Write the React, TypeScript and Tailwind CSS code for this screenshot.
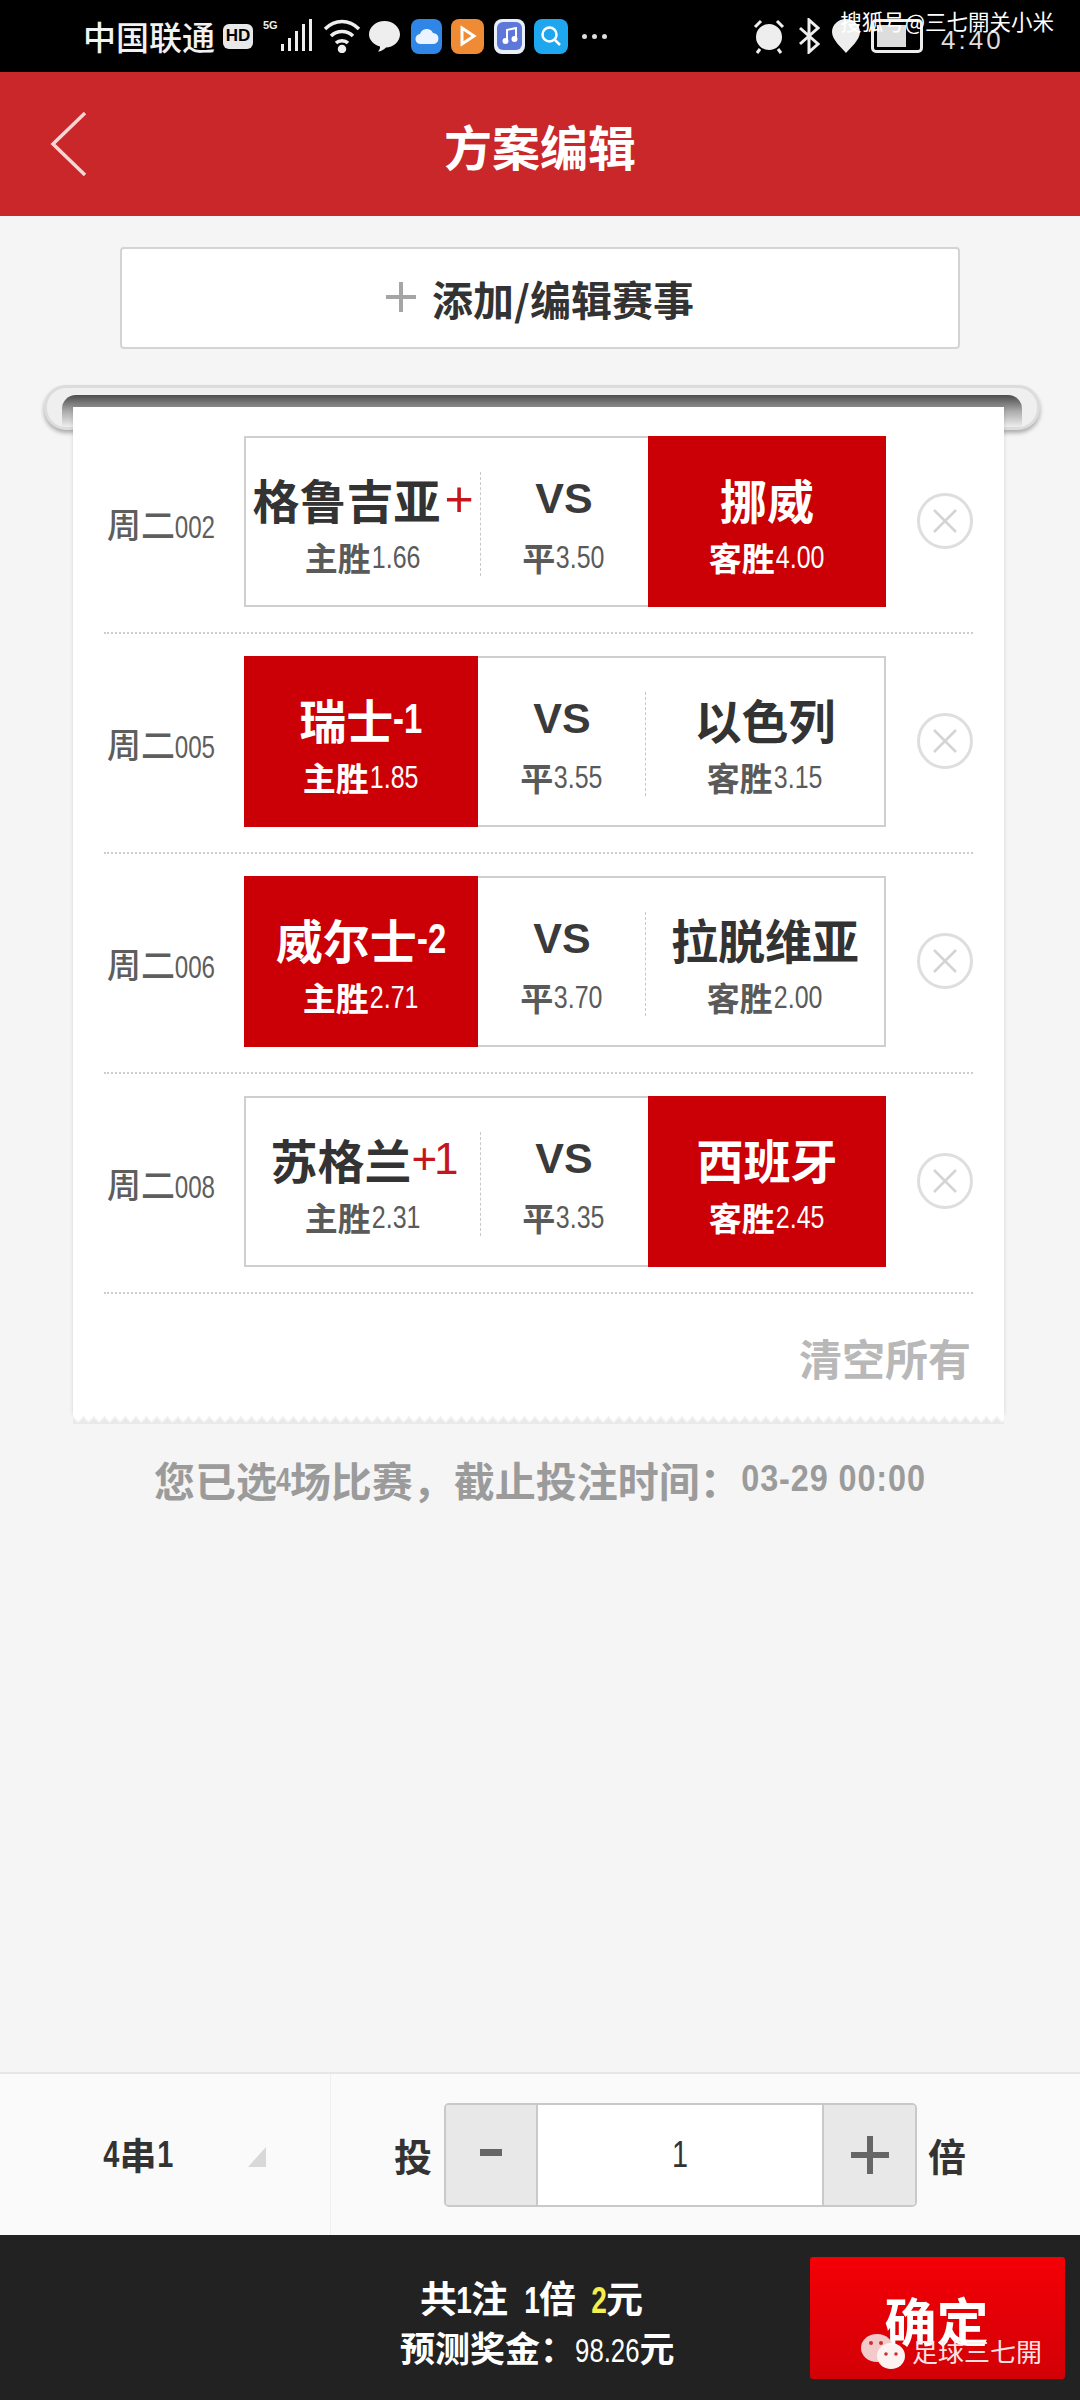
import React from "react";

const cjk = "font-['Noto_Sans_CJK_SC','Liberation_Sans',sans-serif]";
const latin = "font-['Liberation_Sans','Noto_Sans_CJK_SC',sans-serif]";

function Nar({ children, className = "" }: { children: React.ReactNode; className?: string }) {
  return <span className={`inline-block scale-x-[.78] ${latin} ${className}`}>{children}</span>;
}

type Cell = { name: React.ReactNode; odds: string; label: string };
type Row = { code: string; home: Cell; draw: string; away: Cell; picked: "home" | "away" };

const rows: Row[] = [
  {
    code: "002",
    home: { name: <>格鲁吉亚<span className={`${latin} ml-[4px] text-[#c4161c] text-[50px] font-normal`}>+</span></>, label: "主胜", odds: "1.66" },
    draw: "3.50",
    away: { name: "挪威", label: "客胜", odds: "4.00" },
    picked: "away",
  },
  {
    code: "005",
    home: { name: <>瑞士<Nar className="mx-[-4px] text-[42px]">-1</Nar></>, label: "主胜", odds: "1.85" },
    draw: "3.55",
    away: { name: "以色列", label: "客胜", odds: "3.15" },
    picked: "home",
  },
  {
    code: "006",
    home: { name: <>威尔士<Nar className="mx-[-4px] text-[42px]">-2</Nar></>, label: "主胜", odds: "2.71" },
    draw: "3.70",
    away: { name: "拉脱维亚", label: "客胜", odds: "2.00" },
    picked: "home",
  },
  {
    code: "008",
    home: { name: <>苏格兰<span className={`${latin} text-[#c4161c] text-[44px] font-normal tracking-[-3px]`}>+1</span></>, label: "主胜", odds: "2.31" },
    draw: "3.35",
    away: { name: "西班牙", label: "客胜", odds: "2.45" },
    picked: "away",
  },
];

function Team({ cell, on, w }: { cell: Cell; on: boolean; w: string }) {
  return (
    <div className={`${w} h-[171px] shrink-0 flex flex-col items-center pt-[28px] border-y-2 ${on ? "bg-[#cb0007] text-white border-transparent" : "bg-white border-[#cfcfcf] text-[#333]"}`}>
      <div className="h-[65px] flex items-center text-[47px] leading-none font-bold whitespace-nowrap">{cell.name}</div>
      <div className={`h-[52px] flex items-center text-[33px] leading-none font-bold whitespace-nowrap ${on ? "text-white" : "text-[#5a5a5a]"}`}>
        {cell.label}
        <Nar className="mx-[-6px] text-[32px] font-normal">{cell.odds}</Nar>
      </div>
    </div>
  );
}

function MatchRow({ r }: { r: Row }) {
  return (
    <div className="flex items-center mx-[31px] pb-[25px] mb-[22px] border-b-2 border-dotted border-[#cccccc] h-[198px]">
      <div className="w-[140px] pl-[3px] pt-[6px] text-[#5e5e5e] text-[34px] leading-none font-medium whitespace-nowrap">
        周二<Nar className="mx-[-6px] text-[31px] font-normal">{r.code}</Nar>
      </div>
      <div className={`flex w-[642px] h-[171px] border-[#cfcfcf] ${r.picked === "home" ? "border-r-2" : "border-l-2"}`}>
        <Team cell={r.home} on={r.picked === "home"} w="w-[234px]" />
        <div className="relative w-[168px] h-[171px] shrink-0 flex flex-col items-center pt-[28px] bg-white border-y-2 border-[#cfcfcf]">
          <div className={`h-[65px] flex items-center ${latin} text-[43px] leading-none font-bold text-[#3a3a3a]`}>VS</div>
          <div className="h-[52px] flex items-center text-[33px] leading-none font-bold text-[#5a5a5a] whitespace-nowrap">
            平<Nar className="mx-[-6px] text-[32px] font-normal">{r.draw}</Nar>
          </div>
          {r.picked === "away" && <div className="absolute left-0 top-[34px] h-[104px] border-l border-dashed border-[#c8c8c8]" />}
          {r.picked === "home" && <div className="absolute right-0 top-[34px] h-[104px] border-r border-dashed border-[#c8c8c8]" />}
        </div>
        <Team cell={r.away} on={r.picked === "away"} w="flex-1" />
      </div>
      <div className="ml-[31px] mt-[-1px] w-[56px] h-[56px] shrink-0 rounded-full border-[3px] border-[#dedede] flex items-center justify-center">
        <svg width="30" height="30" viewBox="0 0 30 30" fill="none" stroke="#d4d4d4" strokeWidth="2.5"><path d="M4 4 26 26M26 4 4 26" /></svg>
      </div>
    </div>
  );
}

function StatusBar() {
  return (
    <div className="relative h-[72px] shrink-0 bg-black flex items-center pl-[83px] text-white">
      <span className="text-[33px] leading-none font-medium text-[#f2f2f2]">中国联通</span>
      <span className={`ml-[8px] w-[30px] h-[25px] rounded-[6px] bg-[#e8e8e8] text-black text-[17px] font-bold flex items-center justify-center ${latin}`}>HD</span>
      <svg className="ml-[10px]" width="50" height="36" viewBox="0 0 50 36" fill="#eee">
        <text x="0" y="11" fontSize="11" fontFamily="Liberation Sans" fontWeight="bold">5G</text>
        <rect x="18" y="26" width="3" height="7" /><rect x="25" y="20" width="3" height="13" /><rect x="32" y="13" width="3" height="20" /><rect x="39" y="6" width="3" height="27" /><rect x="46" y="1" width="3" height="32" />
      </svg>
      <svg className="ml-[10px]" width="38" height="34" viewBox="0 0 38 34" fill="none" stroke="#eee" strokeWidth="3.5">
        <path d="M2 10c10-10 24-10 34 0M8 17c6-6 16-6 22 0M13 24c3-3 9-3 12 0" /><circle cx="19" cy="30" r="2.5" fill="#eee" />
      </svg>
      <svg className="ml-[7px]" width="33" height="34" viewBox="0 0 33 34" fill="#eee"><path d="M16.5 2C25 2 32 8 32 15.500c0 7-7 13-14 13-2 2-5 4-8 4 2-2 2-4 2-5C6 26 1 21 1 15.500 1 8 8 2 16.500 2Z" /></svg>
      <div className="ml-[10px] w-[31px] h-[35px] rounded-[8px] bg-[#2f86e6] flex items-center justify-center">
        <svg width="24" height="18" viewBox="0 0 24 18" fill="#eaf3ff"><path d="M6 17a5 5 0 0 1-1-10 7 7 0 0 1 13-1 5.500 5.500 0 0 1 0 11Z" /></svg>
      </div>
      <div className="ml-[9px] w-[33px] h-[35px] rounded-[8px] bg-[#ef8b35] flex items-center justify-center">
        <svg width="18" height="22" viewBox="0 0 18 22" fill="none" stroke="#fff" strokeWidth="3"><path d="M3 3 15 11 3 19Z" /></svg>
      </div>
      <div className="ml-[10px] w-[31px] h-[35px] rounded-[8px] bg-[#e9eefb] flex items-center justify-center">
        <div className="w-[25px] h-[28px] rounded-[6px] bg-[#5d78d8] flex items-center justify-center">
          <svg width="16" height="18" viewBox="0 0 16 18" fill="none" stroke="#fff" strokeWidth="2"><path d="M5 14V3l9-2v11" /><circle cx="3.500" cy="14" r="2" fill="#fff" /><circle cx="12.500" cy="12" r="2" fill="#fff" /></svg>
        </div>
      </div>
      <div className="ml-[9px] w-[34px] h-[35px] rounded-[8px] bg-[#1ea7ee] flex items-center justify-center">
        <svg width="22" height="22" viewBox="0 0 22 22" fill="none" stroke="#fff" strokeWidth="2.5"><circle cx="9.500" cy="9.500" r="7" /><path d="M15 15l5 5" /></svg>
      </div>
      <div className="ml-[14px] flex gap-[5px]">
        <span className="w-[5px] h-[5px] rounded-full bg-[#ddd]" /><span className="w-[5px] h-[5px] rounded-full bg-[#ddd]" /><span className="w-[5px] h-[5px] rounded-full bg-[#ddd]" />
      </div>
      <div className="ml-[145px] flex items-center">
        <svg width="34" height="36" viewBox="0 0 34 36" fill="none" stroke="#eee" strokeWidth="4"><circle cx="17" cy="19" r="11" fill="#eee" /><path d="M3 9 9 3M31 9 25 3M8 31 5 35M26 31 29 35" strokeWidth="3" /></svg>
        <svg className="ml-[11px]" width="24" height="36" viewBox="0 0 24 36" fill="none" stroke="#eee" strokeWidth="3"><path d="M3 10 21 26 12 34V2L21 10 3 26" /></svg>
        <svg className="ml-[10px]" width="30" height="36" viewBox="0 0 30 36" fill="#eee"><path d="M15 1C23 1 29 7 29 14 29 22 19 30 15 35 11 30 1 22 1 14 1 7 7 1 15 1Z" /></svg>
        <div className="ml-[10px] w-[52px] h-[34px] rounded-[5px] border-[3px] border-[#eee] p-[3px] pr-[14px]"><div className="h-full bg-[#ddd]" /></div>
        <span className={`ml-[18px] ${latin} text-[26px] font-normal tracking-[3px] leading-none mt-[8px] text-[#ddd]`}>4:40</span>
      </div>
      <span className="absolute right-[26px] top-[8px] text-[21.500px] leading-[26px] text-white whitespace-nowrap">搜狐号@三七開关小米</span>
    </div>
  );
}

function Header() {
  return (
    <div className="h-[144px] shrink-0 bg-[#c92729] grid grid-cols-[1fr_auto_1fr] items-center">
      <svg className="ml-[50px]" width="38" height="66" viewBox="0 0 38 66" fill="none" stroke="#f6d5d5" strokeWidth="3.500"><path d="M35 2 3 33 35 64" /></svg>
      <span className="text-white text-[48px] font-bold leading-none mt-[2px]">方案编辑</span>
      <span />
    </div>
  );
}

function Scroll() {
  return (
    <div className="mt-[36px]">
      <div className="ml-[44px] mr-[40px] h-[45px] rounded-[22px] bg-[#efefef] border-[3px] border-[#dcdcdc] shadow-[0_3px_4px_rgba(0,0,0,.3)] px-[15px] pt-[7px]">
        <div className="h-[32px] rounded-t-[14px] bg-gradient-to-b from-[#4c4c4c] via-[#aaa] to-[#eee]" />
      </div>
      <div className="relative ml-[73px] mr-[76px] mt-[-23px] bg-white shadow-[0_0_4px_rgba(0,0,0,.14)] pt-[29px]">
        {rows.map((r) => <MatchRow key={r.code} r={r} />)}
        <div className="mt-[38px] pr-[33px] h-[83px] text-right text-[43px] leading-[50px] font-bold text-[#b8b8b8]">清空所有</div>
        <svg className="absolute left-0 bottom-[-9px] w-full h-[10px]" viewBox="0 0 931 10" preserveAspectRatio="none">
          <defs>
            <pattern id="zig" width="21" height="10" patternUnits="userSpaceOnUse">
              <path d="M0 4 5 9 10.500 4 15.500 9 21 4V10H0Z" fill="#e9e9e9" />
              <path d="M0 0H21V2L15.500 7 10.500 2 5 7 0 2Z" fill="#fff" />
            </pattern>
          </defs>
          <rect width="931" height="10" fill="url(#zig)" />
        </svg>
      </div>
    </div>
  );
}

function Footer() {
  return (
    <>
      <div className="h-[163px] shrink-0 bg-[#fafafa] border-t-2 border-[#e6e6e6] flex">
        <div className="w-[331px] border-r border-[#efefef] flex items-center pl-[103px] text-[#333] text-[37px] font-bold leading-none">
          <Nar className="mx-[-2px] font-bold">4</Nar>串<Nar className="mx-[-2px] font-bold">1</Nar>
          <svg className="ml-[74px] mb-[-4px]" width="20" height="22" viewBox="0 0 20 22" fill="#d8d8d8"><path d="M19 1V21H1Z" /></svg>
        </div>
        <div className="flex items-center pl-[63px] text-[38px] font-bold text-[#333] leading-none">
          <span>投</span>
          <div className="ml-[12px] w-[473px] h-[104px] rounded-[5px] border-2 border-[#c9c9c9] flex overflow-hidden bg-white">
            <div className="w-[92px] bg-[#e8e8e8] border-r-2 border-[#c9c9c9] flex items-center justify-center">
              <div className="w-[22px] h-[7px] bg-[#666] mb-[4px]" />
            </div>
            <div className={`flex-1 flex items-center justify-center text-[36px] font-normal ${latin}`}><span className="scale-x-[.8]">1</span></div>
            <div className="w-[93px] bg-[#e8e8e8] border-l-2 border-[#c9c9c9] flex items-center justify-center">
              <svg width="38" height="38" viewBox="0 0 38 38" fill="#666"><path d="M16 0h6v16h16v6H22v16h-6V22H0v-6h16Z" /></svg>
            </div>
          </div>
          <span className="ml-[11px]">倍</span>
        </div>
      </div>
      <div className="h-[165px] shrink-0 bg-[#222222] flex text-white">
        <div className="w-[810px] pl-[400px] pt-[37px] font-bold flex flex-col">
          <div className="pl-[20px] h-[50px] text-[37px] leading-[50px] whitespace-nowrap">
            共<Nar className="mx-[-3px] text-[36px]">1</Nar>注<Nar className="ml-[14px] mr-[-3px] text-[36px]">1</Nar>倍<Nar className="ml-[13px] mr-[-3px] text-[36px] text-[#f4ee4e]">2</Nar>元
          </div>
          <div className="mt-[1px] h-[48px] text-[35px] leading-[48px] whitespace-nowrap">
            预测奖金：<Nar className="mx-[-9px] text-[33px] font-normal">98.26</Nar>元
          </div>
        </div>
        <div className="relative mt-[22px] w-[255px] h-[122px] rounded-[3px] bg-gradient-to-b from-[#f40006] to-[#d20006] flex justify-center pt-[25px] text-[52px] leading-[76px] font-bold">
          <span className="mr-[2px] whitespace-nowrap">确定</span>
          <div className="absolute left-[50px] top-[75px] flex items-center text-[#fdeeee] opacity-95">
            <svg width="46" height="38" viewBox="0 0 46 38">
              <ellipse cx="17" cy="16" rx="16" ry="14" fill="#f5d5d5" />
              <ellipse cx="31" cy="24" rx="14" ry="13" fill="#fff" />
              <circle cx="11" cy="11" r="2" fill="#c33" /><circle cx="21" cy="11" r="2" fill="#c33" /><circle cx="26" cy="22" r="1.800" fill="#c33" /><circle cx="36" cy="22" r="1.800" fill="#c33" />
            </svg>
            <span className="ml-[6px] text-[26px] leading-none font-normal whitespace-nowrap">足球三七開</span>
          </div>
        </div>
      </div>
    </>
  );
}

export default function App() {
  return (
    <div className={`w-[1080px] h-[2400px] flex flex-col bg-[#f5f5f5] overflow-hidden ${cjk}`}>
      <StatusBar />
      <Header />
      <div className="flex-1 flex flex-col">
        <div className="mt-[31px] mx-[120px] h-[102px] rounded-[4px] bg-white border-2 border-[#d4d4d4] flex items-center justify-center">
          <svg className="mr-[16px] mb-[2px]" width="30" height="30" viewBox="0 0 30 30" fill="#a5a5a5"><path d="M13 0h4v13h13v4H17v13h-4V17H0v-4h13Z" /></svg>
          <span className="text-[41px] leading-none font-bold text-[#333]">添加/编辑赛事</span>
        </div>
        <Scroll />
        <div className="mt-[34px] h-[60px] flex items-center justify-center text-[41px] leading-none font-bold text-[#9b9b9b] whitespace-nowrap">
          您已选<Nar className="mx-[-3px] text-[34px]">4</Nar>场比赛，截止投注时间：<span className={`inline-block scale-x-[.9] mx-[-10px] ${latin} text-[36px] font-bold tracking-[1px]`}>03-29 00:00</span>
        </div>
      </div>
      <Footer />
    </div>
  );
}
